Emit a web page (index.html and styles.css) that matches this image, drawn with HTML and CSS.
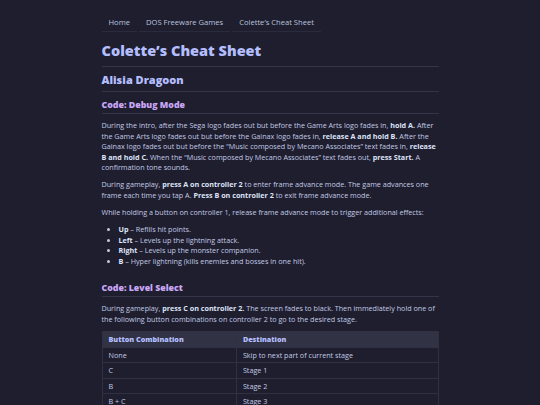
FILE: index.html
```html
<!DOCTYPE html>
<html lang="en">
<head>
    <meta charset="UTF-8">
    <meta name="viewport" content="width=device-width, initial-scale=1.0">
    <title>Colette's Cheat Sheet</title>
    <link rel="stylesheet" href="styles.css">
</head>
<body>

    <div class="container">
        <!-- Breadcrumb -->
        <nav class="crumbs">
            <a href="#">Home</a>
            <a href="#">DOS Freeware Games</a>
            <a href="#">Colette’s Cheat Sheet</a>
        </nav>

        <h1>Colette’s Cheat Sheet</h1>

        <h2>Alisia Dragoon</h2>

        <h3>Code: Debug Mode</h3>
        <p>During the intro, after the Sega logo fades out but before the Game Arts logo fades in, <b>hold A.</b> After the Game Arts logo fades out but before the Gainax logo fades in, <b>release A and hold B.</b> After the Gainax logo fades out but before the “Music composed by Mecano Associates” text fades in, <b>release B and hold C.</b> When the “Music composed by Mecano Associates” text fades out, <b>press Start.</b> A confirmation tone sounds.</p>
        <p>During gameplay, <b>press A on controller 2</b> to enter frame advance mode. The game advances one frame each time you tap A. <b>Press B on controller 2</b> to exit frame advance mode.</p>
        <p>While holding a button on controller 1, release frame advance mode to trigger additional effects:</p>
        <ul>
            <li><b>Up</b> – Refills hit points.</li>
            <li><b>Left</b> – Levels up the lightning attack.</li>
            <li><b>Right</b> – Levels up the monster companion.</li>
            <li><b>B</b> – Hyper lightning (kills enemies and bosses in one hit).</li>
        </ul>

        <h3>Code: Level Select</h3>
        <p>During gameplay, <b>press C on controller 2.</b> The screen fades to black. Then immediately hold one of the following button combinations on controller 2 to go to the desired stage.</p>

        <table>
            <thead>
                <tr>
                    <th>Button Combination</th>
                    <th>Destination</th>
                </tr>
            </thead>
            <tbody>
                <tr><td>None</td><td>Skip to next part of current stage</td></tr>
                <tr><td>C</td><td>Stage 1</td></tr>
                <tr><td>B</td><td>Stage 2</td></tr>
                <tr><td>B + C</td><td>Stage 3</td></tr>
            </tbody>
        </table>
    </div>

</body>
</html>
```

FILE: styles.css
```css
body {
    font-family: 'Open Sans', sans-serif;
    margin: 0;
    padding: 0;
    background-color: #1e1e2e;
    color: #c3c9e4;
    font-size: 7.2px;
    line-height: 10.5px;
}

.container {
    width: 337px;
    margin: 0 auto;
    padding-top: 17px;
}

.crumbs {
    display: flex;
    gap: 2px;
}

.crumbs a {
    color: #bac2de;
    text-decoration: none;
    font-size: 7.6px;
    padding: 0 7px 3px 7px;
    border-bottom: 1px solid #2a2b3c;
}

h1, h2, h3 {
    font-weight: 800;
    margin: 0;
    border-bottom: 1px solid #34354a;
}

h1 {
    color: #b4befe;
    font-size: 14.5px;
    line-height: 20px;
    margin-top: 9px;
    padding-bottom: 5px;
}

h2 {
    color: #b4befe;
    font-size: 11px;
    line-height: 14px;
    margin-top: 6px;
    padding-bottom: 4px;
}

h3 {
    color: #cba6f7;
    font-size: 8.8px;
    line-height: 12px;
    margin-top: 7px;
    padding-bottom: 2px;
}

p {
    margin: 6.5px 0;
}

b {
    color: #dfe4f8;
    font-weight: 700;
}

ul {
    margin: 7px 0 15px 0;
    padding-left: 17px;
}

li {
    line-height: 10.7px;
}

table {
    width: 100%;
    border-collapse: collapse;
    margin-top: 4px;
}

th, td {
    text-align: left;
    padding: 2px 6px;
    height: 10px;
    border: 1px solid #2f3043;
}

th {
    background-color: #313244;
    color: #b4befe;
    font-weight: 800;
    height: 11px;
}

td:first-child, th:first-child {
    width: 40%;
}
```
